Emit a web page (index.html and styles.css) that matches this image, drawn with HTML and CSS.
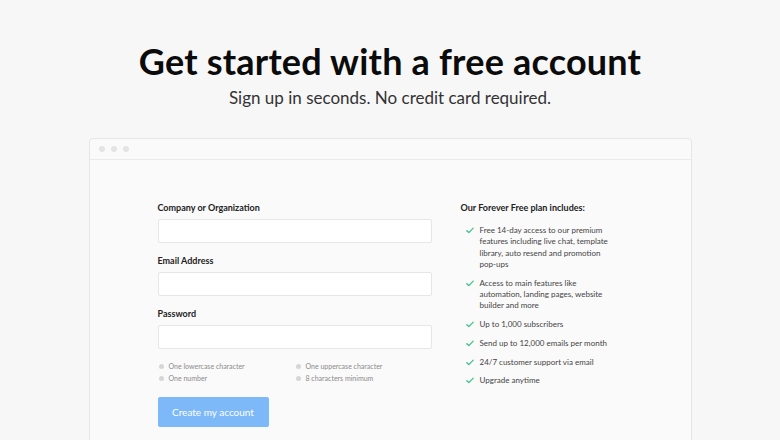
FILE: index.html
```html
<!DOCTYPE html>
<html>
<head>
<meta charset="utf-8">
<link rel="stylesheet" href="styles.css">
</head>
<body>
<div class="page">
  <h1 class="title">Get started with a free account</h1>
  <p class="subtitle">Sign up in seconds. No credit card required.</p>
  <div class="window">
    <div class="titlebar">
      <span class="dot"></span><span class="dot"></span><span class="dot"></span>
    </div>
    <div class="content">
      <form class="form">
        <label class="label">Company or Organization</label>
        <div class="input"></div>
        <label class="label">Email Address</label>
        <div class="input"></div>
        <label class="label">Password</label>
        <div class="input"></div>
        <div class="hints">
          <div class="hint"><span class="hdot"></span>One lowercase character</div>
          <div class="hint"><span class="hdot"></span>One uppercase character</div>
          <div class="hint"><span class="hdot"></span>One number</div>
          <div class="hint"><span class="hdot"></span>8 characters minimum</div>
        </div>
        <div class="button">Create my account</div>
      </form>
      <div class="plan">
        <h2 class="plan-title">Our Forever Free plan includes:</h2>
        <ul class="list">
          <li class="item"><svg class="check" viewBox="0 0 10 8"><path d="M1 4.2 L3.6 6.6 L9 1" fill="none" stroke="#3ec08a" stroke-width="1.6" stroke-linecap="round" stroke-linejoin="round"/></svg><span>Free 14-day access to our premium features including live chat, template library, auto resend and promotion pop-ups</span></li>
          <li class="item"><svg class="check" viewBox="0 0 10 8"><path d="M1 4.2 L3.6 6.6 L9 1" fill="none" stroke="#3ec08a" stroke-width="1.6" stroke-linecap="round" stroke-linejoin="round"/></svg><span>Access to main features like automation, landing pages, website builder and more</span></li>
          <li class="item"><svg class="check" viewBox="0 0 10 8"><path d="M1 4.2 L3.6 6.6 L9 1" fill="none" stroke="#3ec08a" stroke-width="1.6" stroke-linecap="round" stroke-linejoin="round"/></svg><span>Up to 1,000 subscribers</span></li>
          <li class="item"><svg class="check" viewBox="0 0 10 8"><path d="M1 4.2 L3.6 6.6 L9 1" fill="none" stroke="#3ec08a" stroke-width="1.6" stroke-linecap="round" stroke-linejoin="round"/></svg><span>Send up to 12,000 emails per month</span></li>
          <li class="item"><svg class="check" viewBox="0 0 10 8"><path d="M1 4.2 L3.6 6.6 L9 1" fill="none" stroke="#3ec08a" stroke-width="1.6" stroke-linecap="round" stroke-linejoin="round"/></svg><span>24/7 customer support via email</span></li>
          <li class="item"><svg class="check" viewBox="0 0 10 8"><path d="M1 4.2 L3.6 6.6 L9 1" fill="none" stroke="#3ec08a" stroke-width="1.6" stroke-linecap="round" stroke-linejoin="round"/></svg><span>Upgrade anytime</span></li>
        </ul>
      </div>
    </div>
  </div>
</div>
</body>
</html>
```
FILE: styles.css
```css
html, body {
  margin: 0;
  padding: 0;
  background: #f7f7f7;
  height: 440px;
  overflow: hidden;
}
body {
  font-family: Lato, "Open Sans", sans-serif;
  color: #111;
}
.page {
  display: flex;
  flex-direction: column;
  align-items: center;
  padding-top: 39px;
}
.title {
  margin: 0;
  font-size: 36px;
  font-weight: 700;
  line-height: 44px;
  color: #0b0b0b;
  letter-spacing: 0.2px;
}
.subtitle {
  margin: 4px 0 0;
  font-size: 17px;
  line-height: 22px;
  color: #333;
}
.window {
  margin-top: 29px;
  width: 603px;
  height: 320px;
  border: 1px solid #e6e6e6;
  border-radius: 4px;
  background: #fafafa;
  box-sizing: border-box;
}
.titlebar {
  height: 20px;
  border-bottom: 1px solid #ebebeb;
  display: flex;
  align-items: center;
  gap: 6px;
  padding-left: 9px;
}
.dot {
  width: 6px;
  height: 6px;
  border-radius: 50%;
  background: #e4e4e4;
}
.content {
  display: flex;
  padding: 42px 0 0 68px;
  gap: 29px;
}
.form {
  width: 274px;
  display: flex;
  flex-direction: column;
}
.label {
  font-size: 9px;
  font-weight: 700;
  color: #222;
  line-height: 12px;
  margin-bottom: 5px;
}
.input {
  height: 24px;
  box-sizing: border-box;
  background: #fff;
  border: 1px solid #e6e6e6;
  border-radius: 2px;
  margin-bottom: 12px;
}
.hints {
  display: grid;
  grid-template-columns: 137px 1fr;
  row-gap: 3px;
  margin-top: 1px;
}
.hint {
  font-size: 7px;
  line-height: 9px;
  color: #8a8a8a;
  display: flex;
  align-items: center;
}
.hdot {
  width: 5px;
  height: 5px;
  border-radius: 50%;
  background: #d6d6d6;
  margin: 0 5px 0 1px;
}
.button {
  margin-top: 14px;
  width: 111px;
  height: 30px;
  border-radius: 2px;
  background: #7db9f8;
  color: #fff;
  font-size: 10px;
  display: flex;
  align-items: center;
  justify-content: center;
}
.plan {
  width: 150px;
}
.plan-title {
  margin: 0 0 11px;
  font-size: 9px;
  font-weight: 700;
  line-height: 12px;
  color: #222;
  white-space: nowrap;
}
.list {
  list-style: none;
  margin: 0;
  padding: 0 0 0 5px;
}
.item {
  display: flex;
  font-size: 8px;
  line-height: 11.3px;
  color: #444;
  margin-bottom: 7.5px;
}
.check {
  flex: none;
  width: 8px;
  height: 7px;
  margin: 2px 6px 0 0;
}
```
